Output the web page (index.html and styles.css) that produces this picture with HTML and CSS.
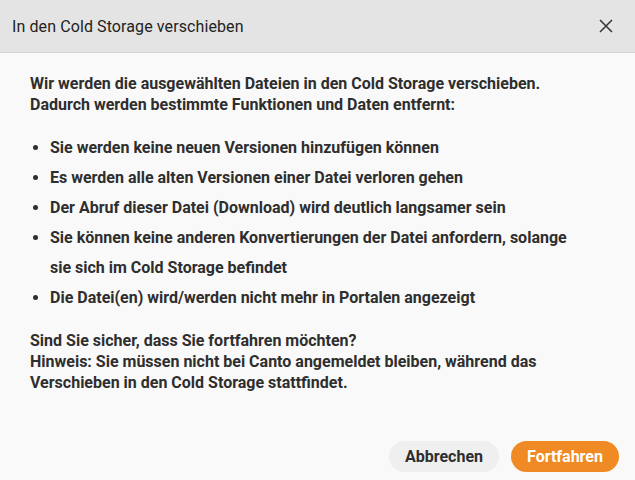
FILE: index.html
```html
<!DOCTYPE html>
<html lang="de">
<head>
<meta charset="utf-8">
<link rel="stylesheet" href="styles.css">
</head>
<body>
<div class="dialog">
  <div class="header">
    <div class="title">In den Cold Storage verschieben</div>
    <button class="close" aria-label="Schließen">
      <svg width="14" height="14" viewBox="0 0 14 14"><path d="M1 1L13 13M13 1L1 13" stroke="#333" stroke-width="1.5" fill="none"/></svg>
    </button>
  </div>
  <div class="body">
    <p class="intro">Wir werden die ausgewählten Dateien in den Cold Storage verschieben.<br>Dadurch werden bestimmte Funktionen und Daten entfernt:</p>
    <ul class="list">
      <li>Sie werden keine neuen Versionen hinzufügen können</li>
      <li>Es werden alle alten Versionen einer Datei verloren gehen</li>
      <li>Der Abruf dieser Datei (Download) wird deutlich langsamer sein</li>
      <li>Sie können keine anderen Konvertierungen der Datei anfordern, solange sie sich im Cold Storage befindet</li>
      <li>Die Datei(en) wird/werden nicht mehr in Portalen angezeigt</li>
    </ul>
    <p class="outro">Sind Sie sicher, dass Sie fortfahren möchten?<br>Hinweis: Sie müssen nicht bei Canto angemeldet bleiben, während das Verschieben in den Cold Storage stattfindet.</p>
  </div>
  <div class="footer">
    <button class="btn btn-cancel">Abbrechen</button>
    <button class="btn btn-primary">Fortfahren</button>
  </div>
</div>
</body>
</html>
```
FILE: styles.css
```css
* { box-sizing: border-box; }
html, body { margin: 0; padding: 0; }
body {
  width: 635px;
  height: 480px;
  background: #f9f9f9;
  font-family: Roboto, "Liberation Sans", sans-serif;
  color: #2e2e2e;
  overflow: hidden;
}
.dialog { display: flex; flex-direction: column; height: 480px; }
.header {
  height: 53px;
  background: #e4e4e4;
  border-bottom: 1px solid #d6d6d6;
  display: flex;
  align-items: center;
  justify-content: space-between;
  padding: 0 22px 0 12px;
}
.title { font-size: 16px; color: #222; letter-spacing: 0.1px; }
.close {
  border: 0; background: none; padding: 0; width: 14px; height: 14px; cursor: pointer;
  display: flex;
}
.body {
  flex: 1;
  padding: 20px 52px 0 30px;
  font-size: 16px;
  font-weight: 700;
}
.intro { margin: 0; line-height: 21px; }
.list {
  margin: 18px 0 0 0;
  padding: 0 0 0 20px;
  line-height: 30px;
}
.outro { margin: 17px 0 0 0; line-height: 21px; }
.footer {
  display: flex;
  justify-content: flex-end;
  gap: 12px;
  padding: 0 16px 8px 0;
}
.btn {
  height: 31px;
  border: 0;
  border-radius: 16px;
  font-family: Roboto, "Liberation Sans", sans-serif;
  font-size: 16px;
  font-weight: 700;
  padding: 0;
}
.btn-cancel { background: #efefef; color: #2e2e2e; width: 110px; }
.btn-primary { background: #f08a24; color: #fff; width: 108px; }
```
